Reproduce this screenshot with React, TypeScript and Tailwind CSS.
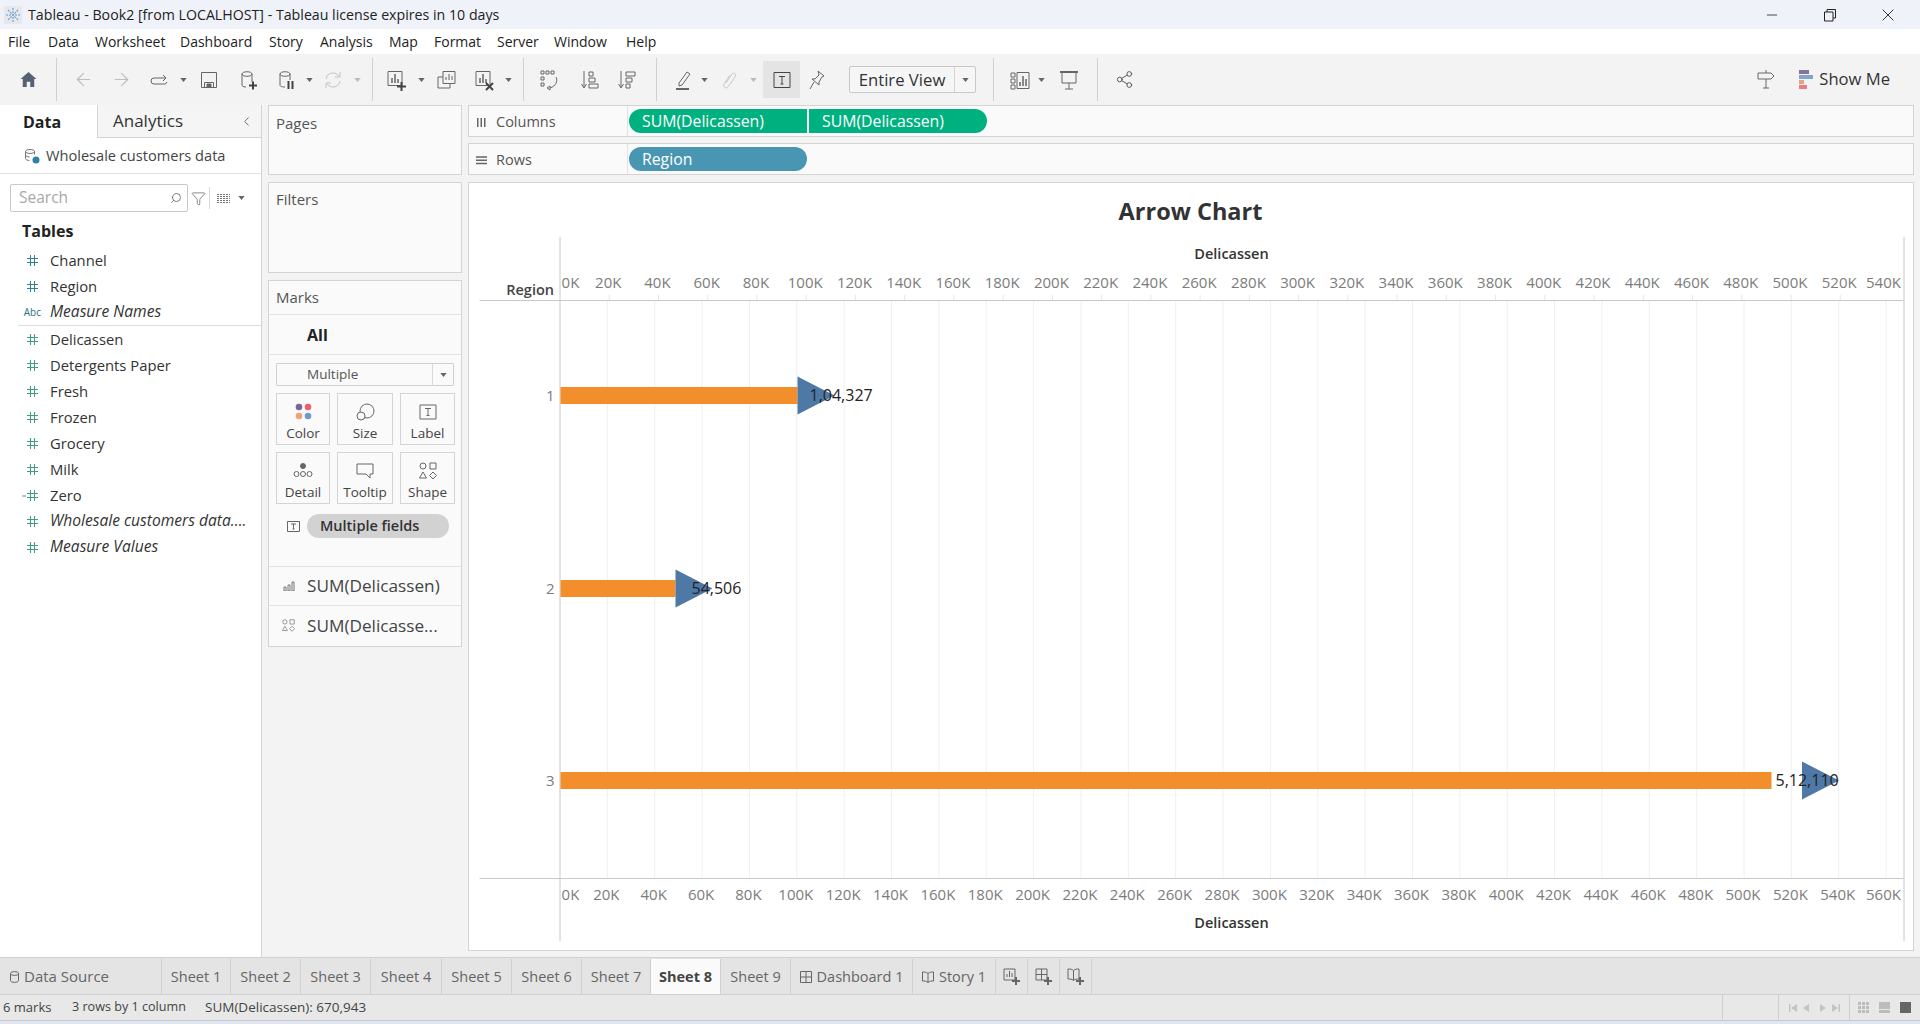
import React from "react";
import { ArrowLeft, ArrowRight, Minus, X, ChevronLeft, Search, Funnel, Share2 } from "lucide-react";

const caret = (
  <svg width="7" height="4" viewBox="0 0 8 5" className="shrink-0">
    <path d="M0 0h8L4 5z" fill="#666" />
  </svg>
);

const caretOff = (
  <svg width="7" height="4" viewBox="0 0 8 5" className="shrink-0">
    <path d="M0 0h8L4 5z" fill="#bbb" />
  </svg>
);

function Hash({ color }: { color: string }) {
  return (
    <svg width="11" height="11" viewBox="0 0 11 11" stroke={color} strokeWidth="1" fill="none">
      <path d="M3.5 0v11M7.5 0v11M0 3.5h11M0 7.5h11" />
    </svg>
  );
}

function Icon({ children, color = "#666" }: { children: React.ReactNode; color?: string }) {
  return (
    <svg width="22" height="22" viewBox="0 0 22 22" fill="none" stroke={color} strokeWidth="1">
      {children}
    </svg>
  );
}

const Sep = () => <div className="h-[43px] w-px shrink-0 bg-[#d0d0d0]" />;

function Cell({ className, children }: { className: string; children?: React.ReactNode }) {
  return <div className={`flex h-full shrink-0 items-center justify-center ${className}`}>{children}</div>;
}

const menus = [
  ["File", "w-[40px]"],
  ["Data", "w-[47px]"],
  ["Worksheet", "w-[85px]"],
  ["Dashboard", "w-[89px]"],
  ["Story", "w-[51px]"],
  ["Analysis", "w-[69px]"],
  ["Map", "w-[45px]"],
  ["Format", "w-[63px]"],
  ["Server", "w-[57px]"],
  ["Window", "w-[72px]"],
  ["Help", "w-[60px]"],
];

const dims = ["Channel", "Region"];
const measures = ["Delicassen", "Detergents Paper", "Fresh", "Frozen", "Grocery", "Milk"];

const sheetTabs = [
  ["Sheet 1", "w-[69px]"],
  ["Sheet 2", "w-[70px]"],
  ["Sheet 3", "w-[70px]"],
  ["Sheet 4", "w-[71px]"],
  ["Sheet 5", "w-[70px]"],
  ["Sheet 6", "w-[70px]"],
  ["Sheet 7", "w-[69px]"],
];

function Toolbar() {
  return (
    <div className="flex h-[51px] shrink-0 items-center bg-[#f3f3f3]">
      <Cell className="w-[56px]">
        <svg width="17" height="15" viewBox="0 0 18 17">
          <path d="M9 0L0 8h2.500v9h4.500v-6h4v6h4.500V8H18z" fill="#566273" />
        </svg>
      </Cell>
      <Sep />
      <Cell className="w-[7px]" />
      <Cell className="w-[38px]"><ArrowLeft size={21} color="#bdbdbd" strokeWidth={1.4} /></Cell>
      <Cell className="w-[39px]"><ArrowRight size={21} color="#bdbdbd" strokeWidth={1.4} /></Cell>
      <Cell className="w-[37px]">
        <Icon><path d="M16 9H5a3 3 0 0 0 0 6h11a3 3 0 0 0 2-2M14 6l3 3-3 3" /></Icon>
      </Cell>
      <Cell className="w-[11px]">{caret}</Cell>
      <Cell className="w-[40px]">
        <Icon><path d="M3.500 3.500h15v15h-15zM6.500 18.500v-5h9v5" /><path d="M9 15h4v3H9z" fill="#666" /></Icon>
      </Cell>
      <Cell className="w-[38px]">
        <Icon>
          <path d="M5 5c0-3 10-3 10 0v8M5 5c0 3 10 3 10 0M5 5v11c0 1 1 2 4 2" />
          <path d="M12 16.500h8M16 12.500v8" stroke="#444" strokeWidth="2" />
        </Icon>
      </Cell>
      <Cell className="w-[37px]">
        <Icon>
          <path d="M5 5c0-3 10-3 10 0v6M5 5c0 3 10 3 10 0M5 5v11c0 1 1 2 5 2" />
          <path d="M13.500 12v8M17.500 12v8" stroke="#444" strokeWidth="2" />
        </Icon>
      </Cell>
      <Cell className="w-[11px]">{caret}</Cell>
      <Cell className="w-[35px]">
        <Icon color="#c4c4c4"><path d="M4 10a7 7 0 0 1 12-4l2 2M18 12a7 7 0 0 1-12 4l-2-2M18 3v5h-5M4 19v-5h5" /></Icon>
      </Cell>
      <Cell className="w-[14px]">{caretOff}</Cell>
      <Cell className="w-[8px]" />
      <Sep />
      <Cell className="w-[3px]" />
      <Cell className="w-[40px]">
        <Icon>
          <path d="M3 2.500h14v14H3z" />
          <path d="M7 14V9M10 14V5M13 14v-4" strokeWidth="1.500" />
          <path d="M12 17.500h9M16.500 13v9" stroke="#444" strokeWidth="2" />
        </Icon>
      </Cell>
      <Cell className="w-[11px]">{caret}</Cell>
      <Cell className="w-[38px]">
        <Icon>
          <path d="M8 2.500h12v12H8zM8 8H3v11h12v-4.500" />
          <path d="M11 11V8M14 11V5M17 11V7" />
        </Icon>
      </Cell>
      <Cell className="w-[38px]">
        <Icon>
          <path d="M3 2.500h14v14H3z" />
          <path d="M7 14V9M10 14V5M13 14v-4" strokeWidth="1.500" />
          <path d="M13 14l7 7M20 14l-7 7" stroke="#444" strokeWidth="2" />
        </Icon>
      </Cell>
      <Cell className="w-[10px]">{caret}</Cell>
      <Cell className="w-[10px]" />
      <Sep />
      <Cell className="w-[50px]">
        <Icon>
          <path d="M3 2h3v3H3zM8 2h3v3H8zM13 2h3v3h-3zM3 8h3v3H3zM3 14h3v3H3z" />
          <path d="M18 8c2 4 0 9-6 11M9 19l3-2v4z" />
        </Icon>
      </Cell>
      <Cell className="w-[32px]">
        <Icon>
          <path d="M5 2v16M2.500 15L5 19l2.500-4" />
          <path d="M10 3h4v4h-4zM10 9h6v4h-6zM10 15h9v4h-9z" />
        </Icon>
      </Cell>
      <Cell className="w-[41px]">
        <Icon>
          <path d="M5 2v16M2.500 15L5 19l2.500-4" />
          <path d="M10 3h9v4h-9zM10 9h6v4h-6zM10 15h4v4h-4z" />
        </Icon>
      </Cell>
      <Cell className="w-[9px]" />
      <Sep />
      <Cell className="w-[8px]" />
      <Cell className="w-[36px]">
        <Icon>
          <path d="M7 14L15 3l3 2-8 11-3 1z" />
          <path d="M4 20h13" strokeWidth="2" />
        </Icon>
      </Cell>
      <Cell className="w-[6px]">{caret}</Cell>
      <Cell className="w-[44px]">
        <Icon color="#c8c8c8">
          <path d="M8 14l6-9c2-2 5 0 3 3l-7 10c-2 2-5 0-4-3l6-9" />
        </Icon>
      </Cell>
      <Cell className="w-[5px]">{caretOff}</Cell>
      <Cell className="w-[7px]" />
      <div className="flex h-[37px] w-[37px] shrink-0 items-center justify-center bg-[#e4e4e4]">
        <Icon color="#444">
          <path d="M3 3.500h16v15H3z" />
          <path d="M8 7.500h6M11 7.500v7.500M9.500 15h3" />
        </Icon>
      </div>
      <Cell className="w-[34px]">
        <Icon>
          <path d="M12 2l6 5-2 1-3 5 0 3-7-6 3 0 4-4zM8 13l-4 7" />
        </Icon>
      </Cell>
      <Cell className="w-[15px]" />
      <div className="flex h-[27px] w-[127px] shrink-0 items-center rounded-[2px] border border-[#c8c8c8] bg-[#f6f6f6] text-[16.700px] text-[#333]">
        <span className="w-[104px] text-center">Entire View</span>
        <div className="flex h-full flex-1 items-center justify-center border-l border-[#d4d4d4]">{caret}</div>
      </div>
      <Cell className="w-[17px]" />
      <Sep />
      <Cell className="w-[10px]" />
      <Cell className="w-[31px]">
        <Icon>
          <path d="M2 4h4v4H2zM2 10h4v4H2zM2 16h4v4H2zM8 3.500h12v16H8z" />
          <path d="M11 17v-4M14 17V7M17 17v-7" strokeWidth="1.500" />
        </Icon>
      </Cell>
      <Cell className="w-[13px]">{caret}</Cell>
      <Cell className="w-[41px]">
        <Icon>
          <path d="M2 3h18" strokeWidth="2" />
          <path d="M4 3v11h14V3M11 14v6M7 20h8" />
        </Icon>
      </Cell>
      <Cell className="w-[8px]" />
      <Sep />
      <Cell className="w-[52px]"><Share2 size={19} color="#555" strokeWidth={1.2} /></Cell>
      <div className="ml-auto flex items-center pr-[30px]">
        <Icon>
          <path d="M3 5h13l3 3-3 3H3zM11 2v3M11 11v9M8 20h6" />
        </Icon>
        <div className="ml-[22px] mr-[6px] flex flex-col gap-[1px]">
          <div className="h-[4px] w-[10px] bg-[#857398]" />
          <div className="h-[4px] w-[14px] bg-[#7fa5cf]" />
          <div className="h-[4px] w-[5px] bg-[#eba27c]" />
          <div className="h-[4px] w-[8px] bg-[#ef7a85]" />
        </div>
        <span className="text-[16.600px] text-[#333]">Show Me</span>
      </div>
    </div>
  );
}

function DataPane() {
  return (
    <aside className="flex w-[262px] shrink-0 flex-col border-r border-[#d4d4d4] bg-white">
      <div className="flex h-[33px] shrink-0 items-center">
        <div className="flex h-full w-[98px] items-center border-r border-[#d4d4d4] pl-[23px] text-[16px] font-bold text-[#222]">Data</div>
        <div className="flex h-full flex-1 items-center justify-between border-b border-[#d4d4d4] bg-[#f5f5f5] pl-[15px] pr-[7px] text-[17px] text-[#333]">
          <span>Analytics</span>
          <ChevronLeft size={15} color="#666" strokeWidth={1.5} />
        </div>
      </div>
      <div className="flex h-[36px] shrink-0 items-center gap-[6px] border-b border-[#e2e2e2] pl-[24px] text-[14.600px] text-[#444]">
        <svg width="16" height="16" viewBox="0 0 16 16" fill="none" stroke="#777">
          <ellipse cx="6" cy="3.500" rx="4.500" ry="2" />
          <path d="M1.500 3.500v7c0 1 2 2 4 2M10.500 3.500v3M1.500 7c0 1 2 2 4 2" />
          <circle cx="12" cy="12" r="3.500" fill="#2f80a8" stroke="none" />
        </svg>
        <span>Wholesale customers data</span>
      </div>
      <div className="mt-[10px] flex h-[28px] shrink-0 items-center pl-[10px]">
        <div className="flex h-full w-[178px] items-center justify-between rounded-[2px] border border-[#c8c8c8] pl-[8px] pr-[5px] text-[15.500px] text-[#a8a8a8]">
          <span>Search</span>
          <Search size={12} color="#555" strokeWidth={1.5} className="-scale-x-100" />
        </div>
        <div className="flex w-[21px] justify-center">
          <Funnel size={15} color="#666" strokeWidth={1.2} />
        </div>
        <div className="h-[22px] w-px bg-[#d8d8d8]" />
        <svg width="13" height="9" viewBox="0 0 13 9" fill="none" stroke="#777" strokeDasharray="2 1" className="ml-[7px]">
          <path d="M0 .5h13M0 2.500h13M0 4.500h13M0 6.500h13M0 8.500h13" />
        </svg>
        <div className="ml-[8px] flex">{caret}</div>
      </div>
      <div className="mt-[6px] pl-[22px] text-[16px] font-bold leading-[26px] text-[#222]">Tables</div>
      <div className="mt-[3px] flex flex-col text-[14.800px] text-[#333]">
        {dims.map((d) => (
          <div key={d} className="flex h-[26px] items-center">
            <div className="flex w-[50px] justify-center pl-[14px]"><Hash color="#2f7f97" /></div>
            {d}
          </div>
        ))}
        <div className="flex h-[26px] items-center text-[15.600px] italic">
          <div className="flex w-[50px] justify-end pr-[9px] text-[10px] not-italic text-[#2f6f87]">Abc</div>
          Measure Names
        </div>
        <div className="ml-[18px] h-px bg-[#dcdcdc]" />
        {measures.map((d) => (
          <div key={d} className="flex h-[26px] items-center">
            <div className="flex w-[50px] justify-center pl-[14px]"><Hash color="#3f9e82" /></div>
            {d}
          </div>
        ))}
        <div className="flex h-[26px] items-center">
          <div className="flex w-[50px] items-center justify-center pl-[10px]">
            <span className="mr-[1px] text-[8px] leading-none text-[#3f9e82]">=</span>
            <Hash color="#3f9e82" />
          </div>
          Zero
        </div>
        <div className="flex h-[26px] items-center text-[15.600px] italic">
          <div className="flex w-[50px] justify-center pl-[14px]"><Hash color="#3f9e82" /></div>
          Wholesale customers data....
        </div>
        <div className="flex h-[26px] items-center text-[15.600px] italic">
          <div className="flex w-[50px] justify-center pl-[14px]"><Hash color="#3f9e82" /></div>
          Measure Values
        </div>
      </div>
    </aside>
  );
}

function MarkButton({ label, children }: { label: string; children: React.ReactNode }) {
  return (
    <div className="flex h-[52px] flex-col items-center border border-[#d4d4d4] pt-[6px] text-[13.500px] leading-[20px] text-[#444]">
      <div className="flex h-[23px] items-center">{children}</div>
      {label}
    </div>
  );
}

function CardsColumn() {
  return (
    <div className="ml-[6px] flex w-[194px] shrink-0 flex-col">
      <div className="h-[70px] border border-[#d4d4d4] bg-[#fafafa] pl-[7px] pt-[6px] text-[15px] text-[#555]">Pages</div>
      <div className="mt-[7px] h-[91px] border border-[#d4d4d4] bg-[#fafafa] pl-[7px] pt-[5px] text-[15px] text-[#555]">Filters</div>
      <div className="mt-[7px] flex h-[367px] flex-col border border-[#d4d4d4] bg-[#fafafa]">
        <div className="flex h-[34px] shrink-0 items-center border-b border-[#e2e2e2] pl-[7px] text-[15px] text-[#555]">Marks</div>
        <div className="flex h-[40px] shrink-0 items-center border-b border-[#e2e2e2] pl-[38px] text-[16px] font-bold text-[#222]">All</div>
        <div className="mx-[7px] mt-[8px] flex h-[23px] shrink-0 items-center rounded-[1px] border border-[#d0d0d0] text-[13.500px] text-[#555]">
          <span className="w-[155px] pl-[30px]">Multiple</span>
          <div className="flex h-full flex-1 items-center justify-center border-l border-[#d8d8d8]">{caret}</div>
        </div>
        <div className="mx-[7px] mt-[7px] grid grid-cols-[54px_56px_55px] gap-x-[7px] gap-y-[7px]">
          <MarkButton label="Color">
            <svg width="17" height="17" viewBox="0 0 17 17">
              <circle cx="4" cy="4" r="3.300" fill="#7b6497" />
              <circle cx="13" cy="4" r="3.300" fill="#ec5f6f" />
              <circle cx="4" cy="13" r="3.300" fill="#f4a273" />
              <circle cx="13" cy="13" r="3.300" fill="#6d9bcf" />
            </svg>
          </MarkButton>
          <MarkButton label="Size">
            <svg width="19" height="18" viewBox="0 0 19 18" fill="none" stroke="#666">
              <circle cx="11" cy="8" r="7" />
              <circle cx="5" cy="13" r="4" fill="#fafafa" />
            </svg>
          </MarkButton>
          <MarkButton label="Label">
            <svg width="18" height="16" viewBox="0 0 18 16" fill="none" stroke="#666">
              <path d="M1 1h16v14H1z" />
              <path d="M6 4.500h6M9 4.500v7M7.500 11.500h3" />
            </svg>
          </MarkButton>
          <MarkButton label="Detail">
            <svg width="20" height="15" viewBox="0 0 20 15" fill="none" stroke="#666">
              <circle cx="10" cy="3" r="2.500" fill="#666" />
              <circle cx="3.500" cy="11" r="2.500" />
              <circle cx="10" cy="11" r="2.500" />
              <circle cx="16.500" cy="11" r="2.500" />
            </svg>
          </MarkButton>
          <MarkButton label="Tooltip">
            <svg width="18" height="16" viewBox="0 0 18 16" fill="none" stroke="#666">
              <path d="M1 1h16v10h-3v4l-4-4H1z" />
            </svg>
          </MarkButton>
          <MarkButton label="Shape">
            <svg width="18" height="18" viewBox="0 0 18 18" fill="none" stroke="#666">
              <circle cx="4" cy="4" r="3" />
              <path d="M11 1h6v6h-6zM4 10l3.500 6h-7zM14 10l3.500 3.500L14 17l-3.500-3.500z" />
            </svg>
          </MarkButton>
        </div>
        <div className="mt-[10px] flex shrink-0 items-center pl-[18px]">
          <svg width="13" height="11" viewBox="0 0 13 11" fill="none" stroke="#666">
            <path d="M.5.500h12v10H.5z" />
            <path d="M4 3h5M6.500 3v5M5.500 8h2" />
          </svg>
          <div className="ml-[7px] flex h-[24px] w-[142px] items-center rounded-full bg-[#d2d2d2] pl-[13px] text-[14.500px] font-semibold text-[#333]">Multiple fields</div>
        </div>
        <div className="mt-[28px] flex h-[40px] shrink-0 items-center border-y border-[#e2e2e2] text-[17.200px] text-[#444]">
          <div className="flex w-[38px] justify-center pl-[1px]">
            <svg width="12" height="10" viewBox="0 0 12 10" fill="none" stroke="#777">
              <path d="M1 6h2v4H1zM5 4h2v6H5zM9 1h2v9H9z" />
            </svg>
          </div>
          SUM(Delicassen)
        </div>
        <div className="flex h-[39px] shrink-0 items-center text-[17.200px] text-[#444]">
          <div className="flex w-[38px] justify-center pl-[1px]">
            <svg width="13" height="13" viewBox="0 0 18 18" fill="none" stroke="#777">
              <circle cx="4" cy="4" r="3" />
              <path d="M11 1h6v6h-6zM4 10l3.500 6h-7zM14 10l3.500 3.500L14 17l-3.500-3.500z" />
            </svg>
          </div>
          SUM(Delicasse...
        </div>
      </div>
    </div>
  );
}

function Shelf({ label, icon, children }: { label: string; icon: React.ReactNode; children: React.ReactNode }) {
  return (
    <div className="flex h-[32px] shrink-0 items-center border border-[#d4d4d4] bg-[#fafafa]">
      <div className="flex h-full w-[159px] items-center gap-[9px] border-r border-[#e2e2e2] pl-[7px] pt-[1px] text-[14.500px] text-[#555]">
        <div className="flex w-[11px] justify-center">{icon}</div>
        {label}
      </div>
      <div className="ml-[1px] flex gap-[2px] text-[15.800px] text-white">{children}</div>
    </div>
  );
}

const topTicks = Array.from({ length: 28 }, (_, i) => i * 20);
const bottomTicks = Array.from({ length: 29 }, (_, i) => i * 20);

function ChartSvg() {
  return (
    <svg viewBox="469 182 1443 767" className="block h-full w-full">
      {bottomTicks.slice(1).map((k) => (
        <line key={k} x1={559.5 + k * 2.368} x2={559.5 + k * 2.368} y1="299" y2="877" stroke="#f0f0f0" />
      ))}
      {topTicks.slice(1, -1).map((k) => (
        <line key={k} x1={559.5 + k * 2.462} x2={559.5 + k * 2.462} y1="294" y2="299" stroke="#e6e6e6" />
      ))}
      <line x1="559.500" x2="559.500" y1="236" y2="940" stroke="#c8c8c8" />
      <line x1="1903.500" x2="1903.500" y1="236" y2="940" stroke="#c8c8c8" />
      <line x1="479" x2="1903" y1="299.500" y2="299.500" stroke="#c8c8c8" />
      <line x1="479" x2="1903" y1="877.500" y2="877.500" stroke="#c8c8c8" />

      <text x="1190" y="219" textAnchor="middle" fontSize="23.500" fontWeight="700" fill="#333">Arrow Chart</text>
      <text x="1231" y="258" textAnchor="middle" fontSize="14.500" fontWeight="600" fill="#333">Delicassen</text>
      <text x="1231" y="927" textAnchor="middle" fontSize="14.500" fontWeight="600" fill="#333">Delicassen</text>
      <text x="553.500" y="294" textAnchor="end" fontSize="14.500" fontWeight="600" fill="#444">Region</text>

      {topTicks.map((k) => (
        <text
          key={k}
          x={k === 0 ? 570 : k === 540 ? 1883 : 558.5 + k * 2.462}
          y="287"
          textAnchor="middle"
          fontSize="15"
          fill="#7c7c7c"
        >
          {k}K
        </text>
      ))}
      {bottomTicks.map((k) => (
        <text
          key={k}
          x={k === 0 ? 570 : k === 560 ? 1883 : 558.5 + k * 2.368}
          y="899"
          textAnchor="middle"
          fontSize="15"
          fill="#7c7c7c"
        >
          {k}K
        </text>
      ))}

      {[
        { row: "1", y: 394.5, end: 797, label: "1,04,327", lx: 809 },
        { row: "2", y: 587.5, end: 675, label: "54,506", lx: 691 },
        { row: "3", y: 779.5, end: 1771, label: "5,12,110", lx: 1775 },
      ].map((r) => {
        const tip = r.row === "3" ? 1801.5 : r.end;
        return (
          <g key={r.row}>
            <text x="554" y={r.y + 5} textAnchor="end" fontSize="15" fill="#7c7c7c">{r.row}</text>
            <rect x="560" y={r.y - 8.5} width={r.end - 560} height="17" fill="#f28e2b" />
            <path d={`M${tip} ${r.y - 19}L${tip + 37} ${r.y}L${tip} ${r.y + 19}z`} fill="#4e79a7" />
            <text x={r.lx} y={r.y + 5} fontSize="16" fill="#222">{r.label}</text>
          </g>
        );
      })}
    </svg>
  );
}

function BottomBars() {
  return (
    <>
      <div className="flex h-[38px] shrink-0 items-stretch border-y border-[#d0d0d0] bg-[#e4e4e4] pt-[1px] text-[14.500px] text-[#666]">
        <div className="flex w-[162px] items-center gap-[5px] border-r border-[#d0d0d0] pl-[10px] text-[15px]">
          <svg width="9" height="12" viewBox="0 0 9 12" fill="none" stroke="#666">
            <path d="M.5 2.500c0-2.500 8-2.500 8 0v7c0 2.500-8 2.500-8 0zM.5 2.500c0 2.500 8 2.500 8 0" />
          </svg>
          Data Source
        </div>
        {sheetTabs.map(([t, w]) => (
          <div key={t} className={`flex items-center justify-center border-r border-[#d0d0d0] ${w}`}>{t}</div>
        ))}
        <div className="flex w-[70px] items-center justify-center border-r border-[#d0d0d0] bg-[#fafafa] font-bold text-[#444]">Sheet 8</div>
        <div className="flex w-[70px] items-center justify-center border-r border-[#d0d0d0]">Sheet 9</div>
        <div className="flex w-[122px] items-center justify-center gap-[5px] border-r border-[#d0d0d0]">
          <svg width="12" height="12" viewBox="0 0 12 12" fill="none" stroke="#666">
            <path d="M.5.500h11v11H.5zM6 .5v11M.5 6h11" />
          </svg>
          Dashboard 1
        </div>
        <div className="flex w-[83px] items-center justify-center gap-[5px] border-r border-[#d0d0d0]">
          <svg width="12" height="12" viewBox="0 0 12 12" fill="none" stroke="#666">
            <path d="M.5 1c2 0 4 0 5.500 1.500C7.500 1 9.500 1 11.500 1v9c-2 0-4 0-5.500 1.500C4.500 10 2.500 10 .5 10zM6 2.500v9" />
          </svg>
          Story 1
        </div>
        <div className="flex w-[32px] items-center justify-center border-r border-[#d0d0d0]">
          <svg width="17" height="17" viewBox="0 0 17 17" fill="none" stroke="#666">
            <path d="M1 1h11v11H1zM4 9V6M6.500 9V3M9 9V5" />
            <path d="M9 13h8M13 9v8" strokeWidth="2" />
          </svg>
        </div>
        <div className="flex w-[32px] items-center justify-center border-r border-[#d0d0d0]">
          <svg width="17" height="17" viewBox="0 0 17 17" fill="none" stroke="#666">
            <path d="M1 1h11v11H1zM6.500 1v11M1 6.500h11" />
            <path d="M9 13h8M13 9v8" strokeWidth="2" />
          </svg>
        </div>
        <div className="flex w-[32px] items-center justify-center border-r border-[#d0d0d0]">
          <svg width="17" height="17" viewBox="0 0 17 17" fill="none" stroke="#666">
            <path d="M1 1c2 0 4 0 5.500 1.500C8 1 10 1 12 1v10c-2 0-4 0-5.500 1.500C5 11 3 11 1 11zM6.500 2.500v10" />
            <path d="M9 13h8M13 9v8" strokeWidth="2" />
          </svg>
        </div>
      </div>
      <div className="flex h-[26px] shrink-0 items-center border-b border-[#c8c8c8] bg-[#e8e8e8] text-[13.500px] text-[#444]">
        <span className="w-[72px] pl-[3px] text-[13px]">6 marks</span>
        <span className="w-[130px] text-[12.600px]">3 rows by 1 column</span>
        <span className="pl-[3px]">SUM(Delicassen): 670,943</span>
        <div className="ml-auto flex h-full w-[198px] items-stretch">
          <div className="w-[57px] border-x border-[#cfcfcf]" />
          <div className="flex w-[71px] items-center justify-center border-r border-[#cfcfcf]">
            <svg width="51" height="10" viewBox="0 0 51 10" fill="#c4c4c4">
              <path d="M0 1h1.500v8H0zM8 1v8L2 5zM20 1v8l-6-4zM31 1v8l6-4zM43 1v8l6-4zM49.500 1h1.500v8h-1.500z" />
            </svg>
          </div>
          <div className="flex flex-1 items-center justify-center gap-[10px] pr-[1px]">
            <div className="grid h-[11px] w-[11px] grid-cols-3 gap-px">
              {Array.from({ length: 9 }, (_, i) => (
                <div key={i} className="bg-[#bcbcbc]" />
              ))}
            </div>
            <div className="flex h-[11px] w-[11px] flex-col gap-px">
              <div className="h-[7px] bg-[#bcbcbc]" />
              <div className="h-[3px] bg-[#bcbcbc]" />
            </div>
            <div className="h-[11px] w-[11px] bg-[#666]" />
          </div>
        </div>
      </div>
      <div className="h-[3px] shrink-0 bg-[#dfe6f1]" />
    </>
  );
}

export default function App() {
  return (
    <div className="flex h-[1024px] w-[1920px] flex-col overflow-hidden bg-[#f3f3f3] font-['Open_Sans',sans-serif]">
      <div className="flex h-[29px] shrink-0 items-center bg-[#eff2f9] pl-[4px] text-[14.200px] text-[#222]">
        <svg width="18" height="18" viewBox="0 0 18 18" fill="none">
          <rect width="18" height="18" fill="#e6e8ee" />
          <path d="M9 2v14M2 9h14M4 4l10 10M14 4L4 14" stroke="#6b9ac6" strokeWidth="1.100" strokeDasharray="2 1" />
        </svg>
        <span className="ml-[6px]">Tableau - Book2 [from LOCALHOST] - Tableau license expires in 10 days</span>
        <div className="ml-auto flex items-center pr-[22px]">
          <Minus size={16} color="#222" strokeWidth={1.2} />
          <svg width="14" height="14" viewBox="0 0 14 14" fill="none" stroke="#222" className="ml-[43px]">
            <path d="M1.500 4h8.500v9H1.500zM4 4V1.500h8.500V10H10" />
          </svg>
          <X size={20} color="#222" strokeWidth={1.1} className="ml-[41px]" />
        </div>
      </div>
      <div className="flex h-[25px] shrink-0 items-center bg-white pl-[8px] text-[14px] text-[#222]">
        {menus.map(([m, w]) => (
          <span key={m} className={w}>{m}</span>
        ))}
      </div>
      <Toolbar />
      <div className="flex min-h-0 flex-1">
        <DataPane />
        <CardsColumn />
        <div className="ml-[6px] mr-[6px] flex min-w-0 flex-1 flex-col">
          <Shelf
            label="Columns"
            icon={
              <svg width="9" height="10" viewBox="0 0 9 10" fill="#666">
                <path d="M0 1h1.500v9H0zM3.500 1H5v9H3.500zM7 1h1.500v9H7z" />
              </svg>
            }
          >
            <div className="flex h-[24px] w-[178px] items-center rounded-l-[12px] bg-[#00b180] pl-[13px] pt-[1px]">SUM(Delicassen)</div>
            <div className="flex h-[24px] w-[178px] items-center rounded-r-[12px] bg-[#00b180] pl-[13px] pt-[1px]">SUM(Delicassen)</div>
          </Shelf>
          <div className="mt-[6px]">
            <Shelf
              label="Rows"
              icon={
                <svg width="12" height="10" viewBox="0 0 12 10" fill="#666">
                  <path d="M0 1h12v1.500H0zM0 4.500h12V6H0zM0 8h12v1.500H0z" />
                </svg>
              }
            >
              <div className="flex h-[24px] w-[178px] items-center rounded-full bg-[#4996b2] pl-[13px] pt-[1px]">Region</div>
            </Shelf>
          </div>
          <div className="mt-[7px] h-[769px] shrink-0 border border-[#d4d4d4] bg-white">
            <ChartSvg />
          </div>
        </div>
      </div>
      <BottomBars />
    </div>
  );
}
